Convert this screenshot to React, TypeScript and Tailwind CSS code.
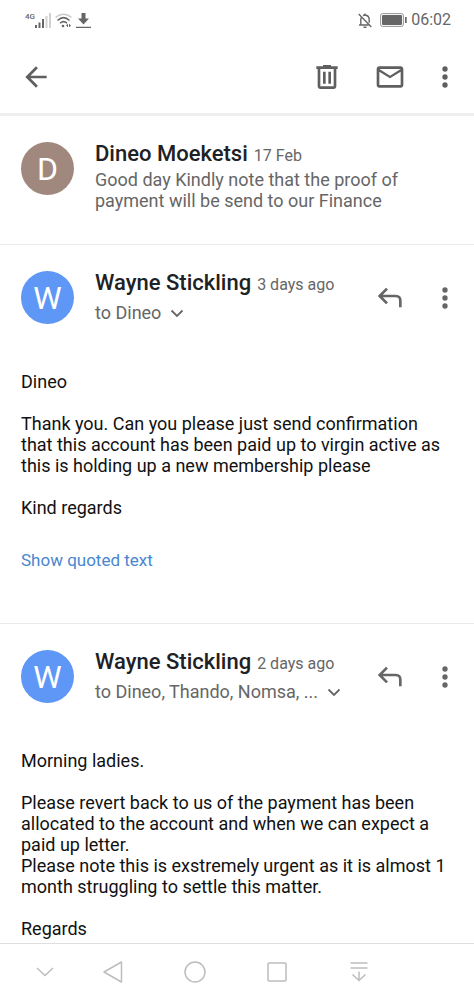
import type { ReactNode } from "react";

type Message = {
  sender: string;
  initial: string;
  color: string;
  date: string;
  to: string;
  lines: string[];
  quoted?: boolean;
};

const messages: Message[] = [
  {
    sender: "Wayne Stickling",
    initial: "W",
    color: "bg-[#5e97f6]",
    date: "3 days ago",
    to: "to Dineo",
    lines: [
      "Dineo",
      "",
      "Thank you. Can you please just send confirmation that this account has been paid up to virgin active as this is holding up a new membership please",
      "",
      "Kind regards",
    ],
    quoted: true,
  },
  {
    sender: "Wayne Stickling",
    initial: "W",
    color: "bg-[#5e97f6]",
    date: "2 days ago",
    to: "to Dineo, Thando, Nomsa, ...",
    lines: [
      "Morning ladies.",
      "",
      "Please revert back to us of the payment has been allocated to the account and when we can expect a paid up letter.",
      "Please note this is exstremely urgent as it is almost 1 month struggling to settle this matter.",
      "",
      "Regards",
    ],
  },
];

function IconButton({ label, children }: { label: string; children: ReactNode }) {
  return (
    <button type="button" aria-label={label} className="flex size-8 shrink-0 items-center justify-center">
      {children}
    </button>
  );
}

function MoreIcon() {
  return (
    <svg width="32" height="32" viewBox="0 0 24 24" fill="currentColor">
      <circle cx="12" cy="6" r="2" />
      <circle cx="12" cy="12" r="2" />
      <circle cx="12" cy="18" r="2" />
    </svg>
  );
}

function StatusBar() {
  return (
    <div className="flex h-10 items-center justify-between pr-[23px] pl-[25px] text-[#666]">
      <div className="flex items-center gap-1">
        <div className="flex">
          <span className="text-[8px] leading-[8px] font-medium">4G</span>
          <svg width="16" height="15" viewBox="0 0 16 15" fill="currentColor">
            <path d="M0 12h2v3H0zM3.500 9.500h2V15h-2zM7 6h2v9H7z" />
            <path d="M10.500 3h2v12h-2zM14 0h2v15h-2z" opacity=".3" />
          </svg>
        </div>
        <svg width="17" height="15" viewBox="0 0 17 15" fill="none" stroke="currentColor" strokeWidth="1.500">
          <path d="M.5 4.500Q8.500-2 16.500 4.500" opacity=".35" />
          <path d="M2.500 7.500Q8.500 1.800 14.500 7.500M5 10.200Q8.500 7 12 10.200" />
          <circle cx="8" cy="13" r="1.300" fill="currentColor" stroke="none" />
          <path d="M13 10.800 11 12.500l2 1.700zM14 10.800l2 1.700-2 1.700z" fill="currentColor" stroke="none" />
        </svg>
        <svg width="15" height="15" viewBox="0 0 15 15" fill="currentColor">
          <path d="M5.500 0h4v5.500H13l-5.500 6-5.500-6h3.500zM0 13.700h15V15H0z" />
        </svg>
      </div>
      <div className="flex items-center gap-2">
        <svg width="14" height="15" viewBox="0 0 14 15" fill="none" stroke="currentColor" strokeWidth="1.400">
          <path d="M.7 1 13.300 14M1 12h9.500M2.800 12V6.500q0-1.500.8-2.500M5 2.500Q6 2 7 2q4.200.4 4.200 4.800v3M7 .4V2M5.500 14.200h3" />
        </svg>
        <svg width="27" height="14" viewBox="0 0 27 14" fill="currentColor">
          <rect x=".6" y=".6" width="22.800" height="12.800" rx="2" fill="none" stroke="currentColor" strokeWidth="1" opacity=".7" />
          <rect x="2" y="2" width="20" height="10" rx="1" />
          <rect x="25" y="4" width="1.700" height="6" />
        </svg>
        <time className="-ml-1 text-base leading-5">06:02</time>
      </div>
    </div>
  );
}

function Toolbar() {
  return (
    <div className="flex h-[73px] items-center pr-[13px] pl-5 text-[#5f5f5f]">
      <IconButton label="Back">
        <svg width="32" height="32" viewBox="0 0 24 24" fill="currentColor">
          <path d="M20 11H7.830l5.590-5.590L12 4l-8 8 8 8 1.410-1.410L7.830 13H20v-2z" />
        </svg>
      </IconButton>
      <div className="ml-auto flex items-center">
        <IconButton label="Delete">
          <svg width="32" height="32" viewBox="0 0 24 24" fill="currentColor">
            <path d="M15 4V3H9v1H4v2h1v13c0 1.100.9 2 2 2h10c1.100 0 2-.9 2-2V6h1V4h-5zm2 15H7V6h10v13z" />
            <path d="M9 8h2v9H9zM13 8h2v9h-2z" />
          </svg>
        </IconButton>
        <div className="mr-[23px] ml-[31px] flex">
          <IconButton label="Mark as unread">
            <svg width="32" height="32" viewBox="0 0 24 24" fill="currentColor">
              <path d="M20 4H4c-1.100 0-2 .9-2 2v12c0 1.100.9 2 2 2h16c1.100 0 2-.9 2-2V6c0-1.100-.9-2-2-2zm0 14H4V8l8 5 8-5v10zm-8-7L4 6h16l-8 5z" />
            </svg>
          </IconButton>
        </div>
        <IconButton label="More options">
          <MoreIcon />
        </IconButton>
      </div>
    </div>
  );
}

function Avatar({ initial, color }: { initial: string; color: string }) {
  return (
    <div className={`flex size-[53px] shrink-0 items-center justify-center rounded-full text-[32px] leading-none text-white ${color}`}>
      {initial}
    </div>
  );
}

function SenderLine({ sender, date }: { sender: string; date: string }) {
  return (
    <div className="flex items-baseline gap-1.5 leading-6 whitespace-nowrap">
      <h2 className="text-[22px] font-medium text-[#202124]">{sender}</h2>
      <span className="text-base leading-5 text-[#666]">{date}</span>
    </div>
  );
}

function MessageItem({ message }: { message: Message }) {
  return (
    <article className="border-t border-[#ebebeb] pt-[26px]">
      <header className="flex h-[53px] gap-[21px] pr-[13px] pl-[21px]">
        <Avatar initial={message.initial} color={message.color} />
        <div className="min-w-0 flex-1">
          <SenderLine sender={message.sender} date={message.date} />
          <button type="button" className="mt-2 flex items-center gap-2 text-lg leading-5 whitespace-nowrap text-[#666]">
            {message.to}
            <svg width="16" height="16" viewBox="0 0 16 16" fill="none" stroke="currentColor" strokeWidth="1.800">
              <path d="m2.500 5.500 5.500 5.500 5.500-5.500" />
            </svg>
          </button>
        </div>
        <div className="flex items-center gap-6 text-[#666]">
          <IconButton label="Reply">
            <svg width="32" height="32" viewBox="0 0 24 24" fill="none" stroke="currentColor" strokeWidth="2">
              <path d="M10.500 5 5 10.500l5.500 5.500M5 10.500h12q3.500 0 3.500 3.500v5" />
            </svg>
          </IconButton>
          <IconButton label="More options">
            <MoreIcon />
          </IconButton>
        </div>
      </header>
      <div className="mt-[47px] px-[21px] text-lg leading-[21px] text-[#111]">
        {message.lines.map((line, i) => (
          <p key={i} className="min-h-[21px]">
            {line}
          </p>
        ))}
      </div>
      {message.quoted && (
        <a href="#quoted" className="mt-8 mb-[52px] ml-[21px] block w-fit text-[17px] leading-[21px] text-[#4a86cf]">
          Show quoted text
        </a>
      )}
    </article>
  );
}

function NavigationBar() {
  return (
    <nav aria-label="System" className="sticky bottom-0 flex h-[57px] items-center border-t border-[#dedede] bg-white pl-[29px] text-[#bdbdbd]">
      <div className="mr-9 flex">
        <IconButton label="Hide bar">
          <svg width="18" height="10" viewBox="0 0 18 10" fill="none" stroke="currentColor" strokeWidth="1.500">
            <path d="m1 1 8 7.500L17 1" />
          </svg>
        </IconButton>
      </div>
      <div className="flex gap-[50px]">
        <IconButton label="Back">
          <svg width="20" height="22" viewBox="0 0 20 22" fill="none" stroke="currentColor" strokeWidth="1.500" strokeLinejoin="round">
            <path d="M18.500 1v20L1 11z" />
          </svg>
        </IconButton>
        <IconButton label="Home">
          <svg width="22" height="22" viewBox="0 0 22 22" fill="none" stroke="currentColor" strokeWidth="1.500">
            <circle cx="11" cy="11" r="10" />
          </svg>
        </IconButton>
        <IconButton label="Recent apps">
          <svg width="20" height="20" viewBox="0 0 20 20" fill="none" stroke="currentColor" strokeWidth="1.500">
            <rect x="1" y="1" width="18" height="18" rx="1" />
          </svg>
        </IconButton>
        <IconButton label="Notifications">
          <svg width="20" height="20" viewBox="0 0 20 20" fill="none" stroke="currentColor" strokeWidth="1.500">
            <path d="M1.500 1h17M1.500 6h17M10 9.500v9M3.500 12.500l6.500 6 6.500-6" />
          </svg>
        </IconButton>
      </div>
    </nav>
  );
}

export default function App() {
  return (
    <div className="flex min-h-screen flex-col bg-white font-[Roboto,sans-serif]">
      <header className="border-b-3 border-[#efefef]">
        <StatusBar />
        <Toolbar />
      </header>
      <main className="flex-1">
        <article className="flex gap-[21px] px-[21px] pt-[26px] pb-[33px]">
          <Avatar initial="D" color="bg-[#a1887f]" />
          <div className="min-w-0 flex-1">
            <SenderLine sender="Dineo Moeketsi" date="17 Feb" />
            <p className="mt-[3px] max-w-[330px] text-lg leading-[21px] text-[#666]">
              Good day Kindly note that the proof of payment will be send to our Finance
            </p>
          </div>
        </article>
        {messages.map((message) => (
          <MessageItem key={message.date} message={message} />
        ))}
      </main>
      <NavigationBar />
    </div>
  );
}
